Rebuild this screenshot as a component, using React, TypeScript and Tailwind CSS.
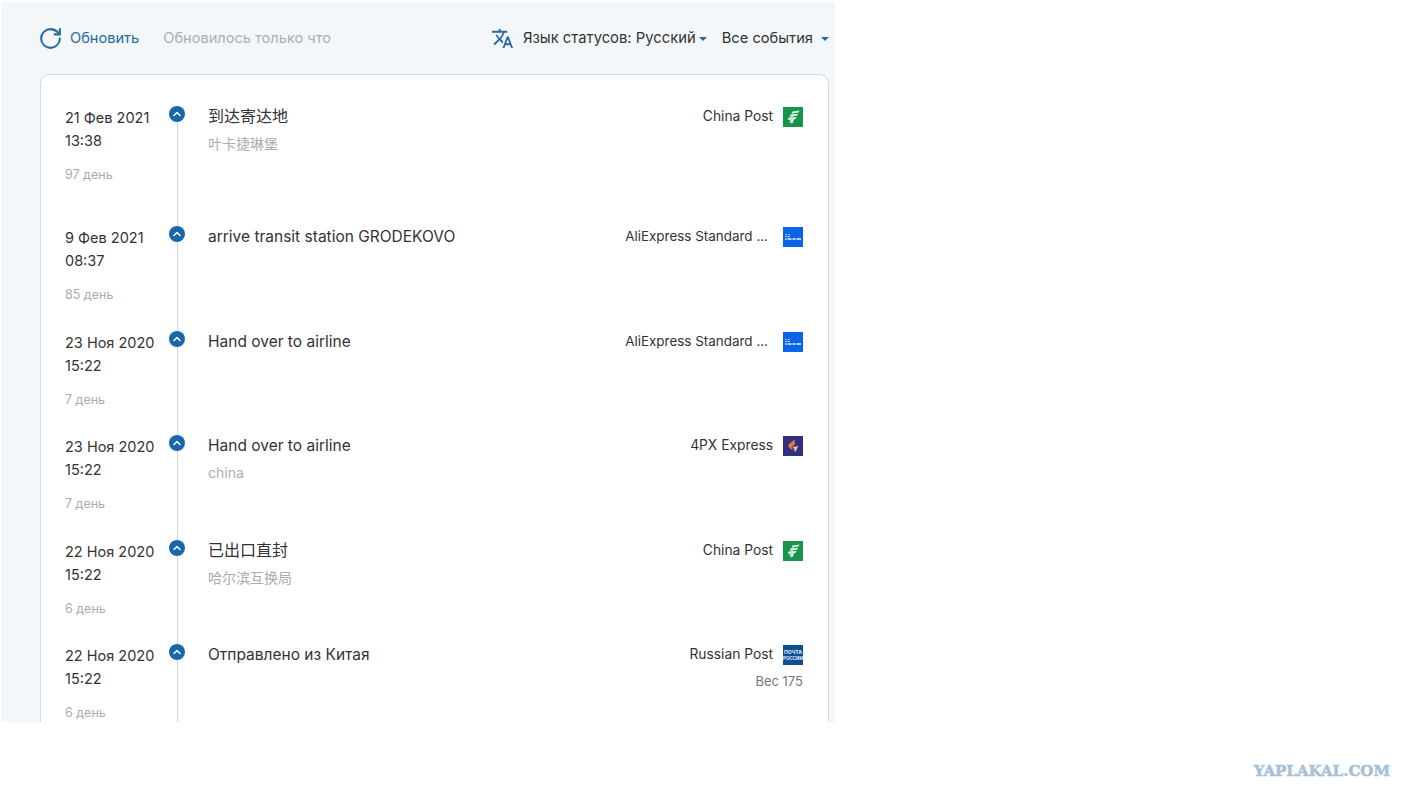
import { ChevronUp, RotateCw } from 'lucide-react'
import { MdTranslate } from 'react-icons/md'

function ChinaPostLogo() {
  return (
    <svg viewBox="0 0 20 20" className="w-5 h-5 shrink-0">
      <rect width="20" height="20" fill="#17934a" />
      <path d="M9.500 4.500L16.500 3.500L15.500 5.500L8.500 6.500z" fill="#e3f4e7" />
      <path d="M7.500 7.500L15 6.800L14 8.800L6.800 9.500z" fill="#e3f4e7" />
      <path d="M5.500 10.500L13.500 10L12.500 12L11 12.200L10 15.500L8.500 16.500L7.500 15L8.500 12.500L5 13z" fill="#e3f4e7" />
      <path d="M9 6.500L11 6.500L8.500 16L6.500 15z" fill="#bfe4c9" />
    </svg>
  )
}

function CainiaoLogo() {
  return (
    <svg viewBox="0 0 20 20" className="w-5 h-5 shrink-0">
      <rect width="20" height="20" fill="#0b63ea" />
      <path d="M2 7.500h2M5 7.500h2M2 9.500h5" stroke="#9fc2f7" strokeWidth="1.200" />
      <path d="M2 12h1.500M4.500 12h4M9.500 12h3M13.500 12h4.500" stroke="#b7d1f9" strokeWidth="2" />
    </svg>
  )
}

function FourPxLogo() {
  return (
    <svg viewBox="0 0 20 20" className="w-5 h-5 shrink-0">
      <rect width="20" height="20" fill="#2f2f86" />
      <path d="M11.500 3.500L12 8L8.500 11.500L10.500 15L6 11.500L5 9z" fill="#e8792b" />
      <path d="M9.500 11L15.500 10L12 16.500L11 13z" fill="#e9b98f" />
    </svg>
  )
}

function RussianPostLogo() {
  return (
    <svg viewBox="0 0 20 20" className="w-5 h-5 shrink-0">
      <rect width="20" height="20" fill="#0c4f93" />
      <text x="10" y="8.500" textAnchor="middle" fontSize="5" fontWeight="700" fill="#e6eff8">ПОЧТА</text>
      <text x="10" y="14.500" textAnchor="middle" fontSize="4.500" fontWeight="700" fill="#e6eff8">РОССИИ</text>
    </svg>
  )
}

const logos = {
  china: <ChinaPostLogo />,
  ali: <CainiaoLogo />,
  px: <FourPxLogo />,
  ru: <RussianPostLogo />,
}

const events = [
  { date: '21 Фев 2021', time: '13:38', days: '97 день', title: '到达寄达地', place: '叶卡捷琳堡', carrier: 'China Post', logo: 'china', height: 'h-[120px]', titleSize: 'text-[16px]' },
  { date: '9 Фев 2021', time: '08:37', days: '85 день', title: 'arrive transit station GRODEKOVO', carrier: 'AliExpress Standard ...', logo: 'ali', height: 'h-[105px]', titleSize: 'text-[15.5px]' },
  { date: '23 Ноя 2020', time: '15:22', days: '7 день', title: 'Hand over to airline', carrier: 'AliExpress Standard ...', logo: 'ali', height: 'h-[104px]', titleSize: 'text-[15.5px]' },
  { date: '23 Ноя 2020', time: '15:22', days: '7 день', title: 'Hand over to airline', place: 'china', carrier: '4PX Express', logo: 'px', height: 'h-[105px]', titleSize: 'text-[15.5px]' },
  { date: '22 Ноя 2020', time: '15:22', days: '6 день', title: '已出口直封', place: '哈尔滨互换局', carrier: 'China Post', logo: 'china', height: 'h-[104px]', titleSize: 'text-[16px]' },
  { date: '22 Ноя 2020', time: '15:22', days: '6 день', title: 'Отправлено из Китая', carrier: 'Russian Post', logo: 'ru', weight: 'Вес 175', height: 'h-[105px]', titleSize: 'text-[15.5px]' },
] as const

function Caret() {
  return <span className="inline-block w-0 h-0 border-x-4 border-x-transparent border-t-4 border-t-[#2a6a9e]" />
}

export default function App() {
  return (
    <div className="h-[802px] bg-white overflow-hidden font-['Inter','Noto_Sans_CJK_SC',sans-serif] text-[15px] text-[#333]">
      <div className="ml-px mt-0.5 w-[834px] h-[720px] bg-[#f3f7fa] pl-[39px] pr-1.5 overflow-hidden">
        <div className="h-[72px] flex items-center">
          <RotateCw size={25} strokeWidth={2} className="text-[#2a6a9e] -ml-0.5" />
          <span className="ml-[7px] mt-px text-[14.6px] text-[#2a6a9e]">Обновить</span>
          <span className="ml-6 mt-px text-[14.6px] text-[#aab0b5]">Обновилось только что</span>
          <MdTranslate size={23} className="ml-auto text-[#2a6a9e]" />
          <span className="ml-[9px] text-[14.8px]">Язык статусов: Русский</span>
          <span className="ml-[3px] mt-0.5 flex"><Caret /></span>
          <span className="ml-[15px] text-[14.7px]">Все события</span>
          <span className="ml-2 mt-0.5 flex"><Caret /></span>
        </div>
        <div className="bg-white border border-[#cfdbe6] rounded-[10px] pt-[31px] pl-6 pr-[25px] h-[700px]">
          {events.map((e, i) => (
            <div key={i} className={`flex ${e.height}`}>
              <div className="w-[104px] shrink-0 text-[14.5px] leading-[23px]">
                <div>{e.date}</div>
                <div>{e.time}</div>
                <div className="mt-3.5 text-[12.5px] leading-[18px] text-[#a8adb1]">{e.days}</div>
              </div>
              <div className="w-4 shrink-0 flex flex-col items-center">
                <div className="w-4 h-4 rounded-full bg-[#1a66ad] flex items-center justify-center shrink-0">
                  <ChevronUp size={12} strokeWidth={3} className="text-white" />
                </div>
                <div className="flex-1 w-px bg-[#c9d6e0]" />
              </div>
              <div className="ml-[23px] flex-1 min-w-0 -mt-px">
                <div className={`leading-[23px] ${e.titleSize}`}>{e.title}</div>
                {'place' in e && <div className="mt-1.5 text-[14px] leading-[20px] text-[#a8adb1]">{e.place}</div>}
              </div>
              <div className="flex flex-col items-end">
                <div className="flex items-center h-5 mt-px">
                  <span className={`leading-[18px] -mt-0.5 ${e.logo === 'ali' ? 'text-[13.45px]' : 'text-[13.8px]'}`}>{e.carrier}</span>
                  <span className={`flex ${e.logo === 'ali' ? 'ml-[15px]' : 'ml-2.5'}`}>{logos[e.logo]}</span>
                </div>
                {'weight' in e && <div className="mt-[7px] text-[13px] leading-[18px] text-[#777]">{e.weight}</div>}
              </div>
            </div>
          ))}
        </div>
      </div>
      <div className="flex justify-end pr-[26px] pt-10">
        <span className="font-['DejaVu_Serif',serif] font-bold text-[15px] leading-[18px] text-[#a6c1d5] [-webkit-text-stroke:0.5px_#a6c1d5]">YAPLAKAL.COM</span>
      </div>
    </div>
  )
}
